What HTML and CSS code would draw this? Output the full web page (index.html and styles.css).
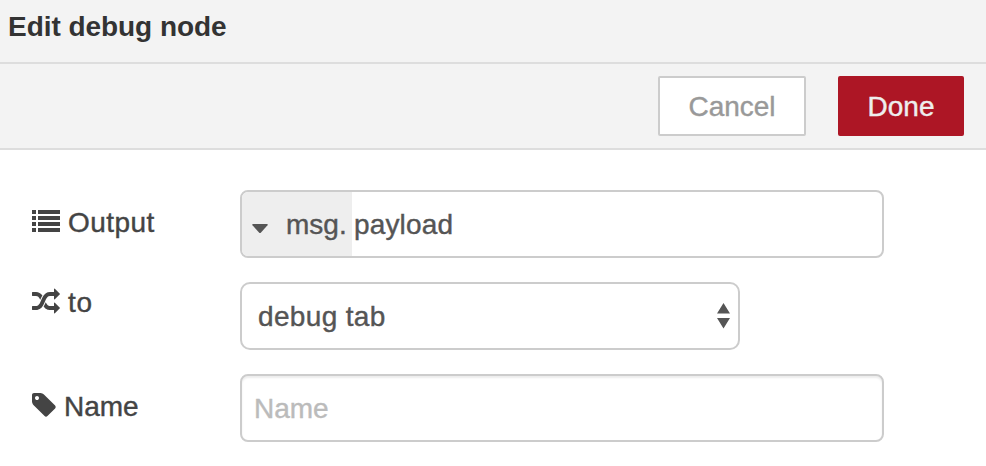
FILE: index.html
```html
<!DOCTYPE html>
<html lang="en">
<head>
<meta charset="utf-8">
<title>Edit debug node</title>
<link rel="stylesheet" href="styles.css">
</head>
<body>
<header class="title"><span class="t-title">Edit debug node</span></header>
<div class="toolbar">
  <button class="btn cancel"><span class="t-cancel">Cancel</span></button>
  <button class="btn done"><span class="t-done">Done</span></button>
</div>
<main class="form">
  <div class="row">
    <div class="label label-output">
      <svg class="icon" viewBox="0 0 28 28" shape-rendering="crispEdges"><path d="M0 3h4v4H0zM6 3h22v4H6zM0 9h4v4H0zM6 9h22v4H6zM0 15h4v4H0zM6 15h22v4H6zM0 21h4v4H0zM6 21h22v4H6z"/></svg>
      <span class="t-output">Output</span>
    </div>
    <div class="field typed">
      <div class="type">
        <svg class="caret" viewBox="0 0 16 10"><path d="M1 0h14q1.400 0 .5 1.200L9 8.500q-1 1-2 0L.5 1.200Q-.4 0 1 0z"/></svg>
        <span class="t-msg">msg.</span>
      </div>
      <span class="t-payload">payload</span>
    </div>
  </div>
  <div class="row">
    <div class="label label-to">
      <svg class="icon shuffle" viewBox="0 0 1792 1792"><path d="M666 481q-60 92-137 273-22-45-37-72.500t-40.500-63.500-51-56.500-63-35-81.500-14.500h-224q-14 0-23-9t-9-23v-192q0-14 9-23t23-9h224q250 0 410 225zm1126 799q0 14-9 23l-320 320q-9 9-23 9-13 0-22.500-9.500t-9.500-22.500v-192q-32 0-85 .5t-81 1-73-1-71-5-64-10.500-63-18.500-58-28.500-59-40-55-53.500-56-69.500q59-93 136-273 22 45 37 72.500t40.500 63.500 51 56.500 63 35 81.500 14.500h256v-192q0-14 9-23t23-9q12 0 24 10l319 319q9 9 9 23zm0-896q0 14-9 23l-320 320q-9 9-23 9-13 0-22.500-9.500t-9.500-22.500v-192h-256q-48 0-87 15t-69 45-51 61.500-45 77.500q-32 62-78 171-29 66-49.500 111t-54 105-64 100-74 83-90 68.500-106.500 42-128 16.500h-224q-14 0-23-9t-9-23v-192q0-14 9-23t23-9h224q48 0 87-15t69-45 51-61.500 45-77.500q32-62 78-171 29-66 49.500-111t54-105 64-100 74-83 90-68.500 106.500-42 128-16.500h256v-192q0-14 9-23t23-9q12 0 24 10l319 319q9 9 9 23z"/></svg>
      <span class="t-to">to</span>
    </div>
    <div class="field select">
      <span class="t-tab">debug tab</span>
      <svg class="arrows" viewBox="0 0 13 26"><path d="M6.500 0L13 10.500H0zM0 15h13L6.500 25.500z"/></svg>
    </div>
  </div>
  <div class="row">
    <div class="label label-name">
      <svg class="icon tag" viewBox="128 0 1536 1792"><path d="M576 448q0-53-37.500-90.500t-90.500-37.500-90.500 37.500-37.500 90.500 37.500 90.500 90.500 37.500 90.500-37.500 37.500-90.500zm1067 576q0 53-37 90l-491 492q-39 37-91 37-53 0-90-37l-715-716q-38-37-64.500-101t-26.500-117v-416q0-52 38-90t90-38h416q53 0 117 26.500t102 64.500l715 714q37 39 37 91z"/></svg>
      <span class="t-name">Name</span>
    </div>
    <div class="field name"><span class="t-ph">Name</span></div>
  </div>
</main>
</body>
</html>
```
FILE: styles.css
```css
* { box-sizing: border-box; }
body {
  margin: 0;
  height: 466px;
  overflow: hidden;
  background: #fff;
  color: #444;
  font: 28px/40px "Helvetica Neue", "Liberation Sans", Arial, sans-serif;
  -webkit-text-stroke: 0.4px currentColor;
}
span { white-space: nowrap; }
svg { display: block; flex: none; fill: currentColor; }
.title {
  height: 64px;
  padding: 7px 8px 0;
  background: #f3f3f3;
  border-bottom: 2px solid #ddd;
  color: #333;
  font-weight: bold;
  letter-spacing: -0.05px;
  -webkit-text-stroke: 0;
}
.toolbar {
  display: flex;
  justify-content: flex-end;
  gap: 32px;
  height: 86px;
  padding: 12px 22px 0 0;
  background: #f3f3f3;
  border-bottom: 2px solid #ddd;
}
.btn {
  height: 60px;
  padding: 2px 0 0;
  border: 2px solid #ccc;
  border-radius: 2px;
  font: inherit;
  -webkit-text-stroke: inherit;
}
.cancel { width: 148px; background: #fff; color: #999; }
.done { width: 126px; background: #ad1625; border-color: #ad1625; color: #eee; }
.form {
  display: flex;
  flex-direction: column;
  gap: 24px;
  padding: 40px 0 0 32px;
}
.row { display: grid; grid-template-columns: 208px auto; justify-content: start; height: 68px; }
.label { display: flex; align-items: flex-start; gap: 8px; height: 40px; }
.label span { margin-top: 1px; }
.label-output { margin-top: 12px; }
.label-to { margin-top: 0; }
.label-name { margin-top: 12px; }
.icon { width: 28px; height: 28px; margin-top: 5px; }
.shuffle { margin-top: 5.5px; }
.tag { width: 24px; }
.t-output { letter-spacing: 0.45px; }
.t-to { letter-spacing: 0.8px; }
.field {
  display: flex;
  align-items: center;
  width: 644px;
  height: 68px;
  border: 2px solid #ccc;
  border-radius: 8px;
  background: #fff;
  color: #555;
  overflow: hidden;
}
.field span { padding-top: 2px; }
.type {
  display: flex;
  align-items: center;
  width: 110px;
  height: 64px;
  padding-left: 10px;
  gap: 18px;
  background: #eee;
}
.caret { width: 16px; height: 10px; margin-top: 10px; }
.t-payload { margin-left: 2px; letter-spacing: 0.15px; }
.t-tab { letter-spacing: 0.35px; }
.select { width: 500px; justify-content: space-between; padding: 0 8px 0 16px; border-radius: 10px; }
.arrows { width: 13px; height: 26px; }
.name { padding-left: 12px; color: #bbb; box-shadow: inset 0 2px 2px rgba(0, 0, 0, 0.075); }
```
